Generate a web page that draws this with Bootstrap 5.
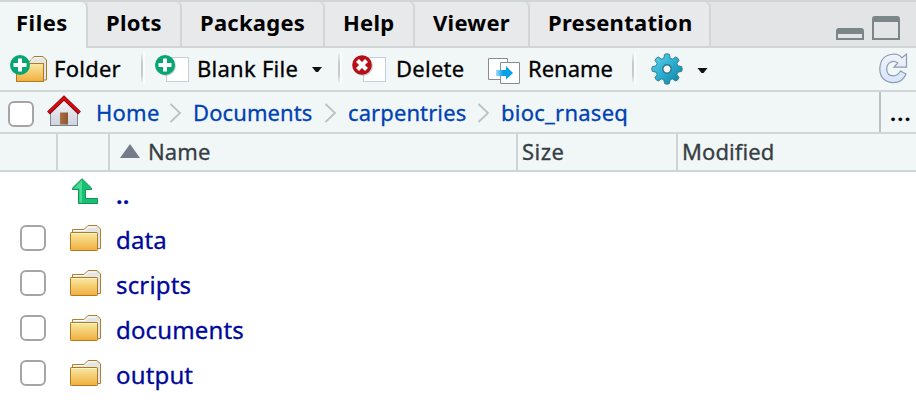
<!DOCTYPE html>
<html lang="en">
<head>
<meta charset="utf-8">
<title>Files</title>
<link href="https://cdn.jsdelivr.net/npm/bootstrap@5.3.0/dist/css/bootstrap.min.css" rel="stylesheet">
<style>
body{font:22px/30px "Noto Sans","Open Sans",sans-serif;letter-spacing:.25px;color:#000;background:#fff;overflow:hidden;width:916px;height:408px;white-space:nowrap;-webkit-text-stroke:.3px}
svg{flex:none;display:block;overflow:visible}
a{text-decoration:none}
.pane-tabs{height:48px;background:#e3e4e6;border-top:2px solid #cfd6d5;border-bottom:2px solid #cfd6d5;flex-wrap:nowrap;-webkit-text-stroke:0}
.pane-tabs .nav-link{height:44px;padding:4.5px 0 0 18px;font-weight:700;color:#000;background:#e8e9eb;border:0;box-shadow:inset -2px 0 #cfd6d5;border-radius:0 5px 0 0}
.pane-tabs .nav-link.active{height:46px;background:#f1f7f7;padding-left:16px;letter-spacing:.5px}
.w-files{width:88px}.w-plots{width:94px}.w-pack{width:143px}.w-help{width:90px}.w-view{width:115px}.w-pres{width:181px}
.tools{height:44px;background:#f1f7f7;border-bottom:2px solid #cfd6d5;padding:0 8px 2px 10px}
.t-folder{width:87px;margin-left:6px}.t-blank{width:115px;margin-left:7px}.t-delete{width:92px;margin-left:9px}.t-rename{width:104px;margin-left:7px;letter-spacing:0}
.sep{width:2px;height:32px;margin-right:12px;background:linear-gradient(#f1f7f7,#c5cacd 35%,#c5cacd 70%,#f1f7f7);box-shadow:2px 0 #fafcfc;flex:none}
.crumbs{height:42px;background:#f1f7f7;border-bottom:2px solid #cfd6d5}
.crumbs a{color:#0042b5;flex:none}
.box{width:26px;height:26px;border:2px solid #a5a5a5;border-radius:6px;background:#fff;margin:0;flex:none}
.c-home{width:72px}.c-docs{width:130px;letter-spacing:.1px}.c-carp{width:128px;letter-spacing:.1px}.c-chev{width:25px}
.more{width:37px;height:40px;border-left:2px solid #b9c0c6;padding-left:9px;letter-spacing:1.2px;font-weight:600}
.heads{height:38px;background:#f1f7f7;border-bottom:2px solid #cfd4d6;color:#363e44;letter-spacing:.1px}
.heads>div{height:36px;flex:none;border-right:2px solid #cfd4d6;padding-top:2px}
.h-a{width:58px}.h-b{width:52px}.h-c{width:408px}.h-d{width:160px;padding-left:4px;letter-spacing:.5px}.heads>.h-e{width:238px;border:0;padding-left:4px}
.entry{height:45px;padding-left:20px;font-size:24px;letter-spacing:.15px}
.entry.up{height:44px}
.entry .box{margin-bottom:2px}
.entry a{color:#00079a;padding-top:2px}
.entry .ico{margin:0 14px 2px 24px}
</style>
</head>
<body>
<svg width="0" height="0" class="position-absolute">
<defs>
<linearGradient id="gold" x2="0" y2="1"><stop stop-color="#f8eaa2"/><stop offset="1" stop-color="#f1ae3d"/></linearGradient>
<linearGradient id="wall" x2="0" y2="1"><stop stop-color="#f4f5f8"/><stop offset="1" stop-color="#cfd1dc"/></linearGradient>
<linearGradient id="teal" x2="1" y2="1"><stop stop-color="#5fd6ee"/><stop offset=".5" stop-color="#2baed0"/><stop offset="1" stop-color="#087d9e"/></linearGradient>
<linearGradient id="door" x2="1"><stop stop-color="#a96f43"/><stop offset="1" stop-color="#895631"/></linearGradient>
<linearGradient id="move" x2="1"><stop stop-color="#a5e0f8"/><stop offset=".4" stop-color="#0aa0e8"/></linearGradient>
<linearGradient id="ice" x2="0" y2="1"><stop stop-color="#f0f4fa"/><stop offset="1" stop-color="#d7e5fa"/></linearGradient>
<symbol id="folder" viewBox="0 0 32 28"><path d="M2.5 8V5.5H14L18 1.5H27L30.5 5V24.5H27.5" fill="#e3e6e4" stroke="#b18029"/><path d="M4 7V6.5H15L18.5 3H26" fill="none" stroke="#fff"/><rect x=".5" y="8.5" width="27" height="18" rx=".7" fill="url(#gold)" stroke="#b07a20"/><path d="M2 9.5H26" stroke="#fdf6cb"/></symbol>
<symbol id="plus" viewBox="0 0 20 20"><circle cx="10" cy="10" r="10" fill="#08a574"/><path d="M10 3.5V16.5M3.5 10H16.5" stroke="#fff" stroke-width="4"/></symbol>
</defs>
</svg>

<nav class="nav pane-tabs">
<a href="#" class="nav-link active w-files">Files</a><a href="#" class="nav-link w-plots">Plots</a><a href="#" class="nav-link w-pack">Packages</a><a href="#" class="nav-link w-help">Help</a><a href="#" class="nav-link w-view">Viewer</a><a href="#" class="nav-link w-pres">Presentation</a>
<svg class="ms-auto me-3 mt-3" width="64" height="24" viewBox="0 2 64 24"><g fill="#7b8689"><path d="M0 24V15Q0 12 3 12H25Q28 12 28 15V24ZM2 18V22H26V18Z" fill-rule="evenodd"/><path d="M36 24V3Q36 0 39 0H61Q64 0 64 3V24ZM38 6V22H62V6Z" fill-rule="evenodd"/></g></svg>
</nav>

<div class="tools d-flex align-items-center">
<svg width="38" height="30" viewBox="0 0 38 30"><path d="M18 10L24 3.5H33L36.5 7V27H33" fill="#e3e6e4" stroke="#a97a28"/><path d="M21 7L25 4.7H32" fill="none" stroke="#fff"/><rect x="6.5" y="10.5" width="27" height="18" fill="url(#gold)" stroke="#b07a20"/><use href="#plus" y="2" width="20" height="20"/></svg>
<span class="t-folder flex-shrink-0">Folder</span>
<span class="sep"></span>
<svg width="35" height="30" viewBox="0 0 35 30"><rect x="11.5" y="4.5" width="22" height="24" fill="#fff" stroke="#c6cfda"/><circle cx="11" cy="13" r="10" fill="#849a94" opacity=".45"/><use href="#plus" y="2" width="20" height="20"/></svg>
<span class="t-blank flex-shrink-0">Blank File</span>
<svg width="10" height="6" viewBox="0 0 10 6" class="mt-1"><path d="M0 0H10L6 5H4Z" fill="#111"/></svg>
<span class="sep ms-3"></span>
<svg width="35" height="30" viewBox="0 0 35 30"><rect x="11.5" y="4.5" width="22" height="24" fill="#fff" stroke="#c6cfda"/><circle cx="11" cy="13" r="10" fill="#849a94" opacity=".45"/><circle cx="10" cy="12" r="9.8" fill="#b70f18"/><path d="M5.5 7.5L14.5 16.5M14.5 7.5L5.5 16.5" stroke="#fff" stroke-width="4.2"/></svg>
<span class="t-delete flex-shrink-0">Delete</span>
<svg width="33" height="27" viewBox="0 0 33 27" class="mt-1"><g fill="#fff"><path d="M.5 1.5H19.5V22.5H.5Z" stroke="#858e96"/><path d="M12.5 5.5H31.5V26.5H12.5Z" stroke="#858e96"/></g><path d="M8 13H18V9L25 16L18 22.5V19H8Z" fill="url(#move)"/></svg>
<span class="t-rename flex-shrink-0">Rename</span>
<span class="sep"></span>
<svg width="32" height="32" viewBox="-17 -17 32 32" class="ms-1"><g fill="url(#teal)" stroke="#35748a" stroke-width=".9"><path d="M-3.2-10.8L-2.4-14.6Q0-16 2.4-14.6L3.2-10.8L5.4-9.9L8.6-12Q11.3-11.3 12-8.6L9.9-5.4L10.8-3.2L14.6-2.4Q16 0 14.6 2.4L10.8 3.2L9.9 5.4L12 8.6Q11.3 11.3 8.6 12L5.4 9.9L3.2 10.8L2.4 14.6Q0 16-2.4 14.6L-3.2 10.8L-5.4 9.9L-8.6 12Q-11.3 11.3-12 8.6L-9.9 5.4L-10.8 3.2L-14.6 2.4Q-16 0-14.6-2.4L-10.8-3.2L-9.9-5.4L-12-8.6Q-11.3-11.3-8.6-12L-5.4-9.9Z"/><circle r="4.2" fill="#f1f7f7" stroke-width="1.4"/></g></svg>
<svg width="10" height="6" viewBox="0 -1 10 6" class="mt-1 ms-3"><path d="M-.5 0H9.5L5.5 5H3.5Z" fill="#111"/></svg>
<svg class="ms-auto" width="29" height="31" viewBox="0 0 29 31"><path d="M23 4.8L27.5 1V14.2H15L18.8 10Q15 7.3 11.5 9.2Q7.7 11.2 7.7 16Q7.7 22.8 14.5 22.8Q19 22.8 21.5 18L27 21Q23.5 29.7 14.5 29.7Q.8 29 .8 15.5Q1.5 1.8 15 1Q20 1 23 4.8Z" fill="url(#ice)" stroke="#8e9bb0" stroke-width="1.2"/></svg>
</div>

<div class="crumbs d-flex align-items-center">
<span class="box ms-2 mt-1"></span>
<svg width="34" height="32" viewBox="0 0 34 32" style="margin:0 15px 3px 13px"><path d="M3.5 16L17 4L30.5 16V30.5H3.5Z" fill="url(#wall)" stroke="#7f8c98"/><path d="M3 30.5H31" stroke="#73828e"/><rect x="13" y="17.5" width="8" height="12" fill="url(#door)"/><path d="M1.5 18L17 3L32.5 18" fill="none" stroke="#7d0d12" stroke-width="4"/><path d="M1.5 17.5L17 2.8L32.5 17.5" fill="none" stroke="#e30613" stroke-width="2.4"/></svg>
<a href="#" class="c-home">Home</a>
<svg class="c-chev" height="20" viewBox="0 0 25 20"><path d="M2.5 2L12 11L2.5 20" fill="none" stroke="#bbc1c5" stroke-width="1.8"/></svg>
<a href="#" class="c-docs">Documents</a>
<svg class="c-chev" height="20" viewBox="0 0 25 20"><path d="M2.5 2L12 11L2.5 20" fill="none" stroke="#bbc1c5" stroke-width="1.8"/></svg>
<a href="#" class="c-carp">carpentries</a>
<svg class="c-chev" height="20" viewBox="0 0 25 20"><path d="M2.5 2L12 11L2.5 20" fill="none" stroke="#bbc1c5" stroke-width="1.8"/></svg>
<a href="#">bioc_rnaseq</a>
<span class="more ms-auto d-flex align-items-center">...</span>
</div>

<div class="heads d-flex">
<div class="h-a"></div><div class="h-b"></div>
<div class="h-c d-flex"><svg width="20" height="14" viewBox="0 0 20 14" style="margin:8px 8px 0 10px"><path d="M10 0L20 14H0Z" fill="#737c88"/></svg><span>Name</span></div>
<div class="h-d">Size</div><div class="h-e">Modified</div>
</div>

<div class="entry up d-flex align-items-center">
<svg width="27" height="27" viewBox="0 0 27 27" style="margin:0 17px 6px 52px"><path d="M10 .7L19.5 10V11.5H13.5V20.5H25.5V25.5H6.5V11.5H.5V10Z" fill="#17c174" stroke="#139358"/><path d="M10 2L2 10.5H7.5V24.5H10Z" fill="#4bd995"/></svg>
<a href="#" class="fw-semibold">..</a></div>
<div class="entry d-flex align-items-center"><span class="box"></span><svg width="32" height="28" class="ico"><use href="#folder" width="32" height="28"/></svg><a href="#">data</a></div>
<div class="entry d-flex align-items-center"><span class="box"></span><svg width="32" height="28" class="ico"><use href="#folder" width="32" height="28"/></svg><a href="#">scripts</a></div>
<div class="entry d-flex align-items-center"><span class="box"></span><svg width="32" height="28" class="ico"><use href="#folder" width="32" height="28"/></svg><a href="#">documents</a></div>
<div class="entry d-flex align-items-center"><span class="box"></span><svg width="32" height="28" class="ico"><use href="#folder" width="32" height="28"/></svg><a href="#">output</a></div>
<script src="https://cdn.jsdelivr.net/npm/bootstrap@5.3.0/dist/js/bootstrap.bundle.min.js"></script>
</body>
</html>
